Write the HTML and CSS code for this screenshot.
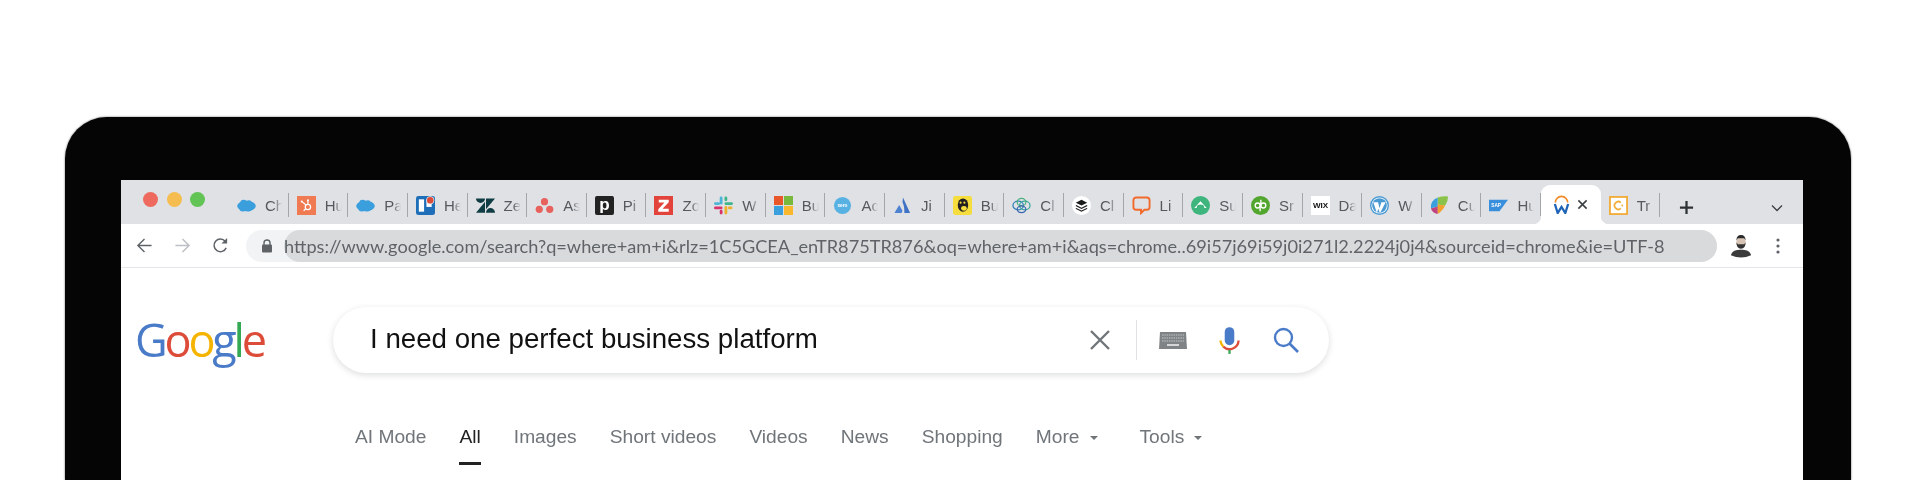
FILE: index.html
```html
<!DOCTYPE html>
<html lang="en">

<head>
    <meta charset="UTF-8">
    <meta name="viewport" content="width=device-width, initial-scale=1.0">
    <title>I need one perfect business platform</title>
    <link rel="stylesheet" href="styles.css">
</head>

<body>

    <div class="laptop">
        <div class="screen">

            <div class="tabstrip">
                <div class="lights">
                    <span class="light red"></span>
                    <span class="light yellow"></span>
                    <span class="light green"></span>
                </div>

                <div class="tab">
                    <svg viewBox="0 0 20 20"><g fill="#3a9fdc"><ellipse cx="10" cy="10.500" rx="9.800" ry="5.500"/><circle cx="7" cy="7.500" r="3.600"/><circle cx="12.500" cy="7.500" r="3"/><circle cx="6" cy="13" r="3.400"/><circle cx="12" cy="13" r="3.400"/></g></svg>
                    <span class="label">Ch</span>
                </div>
                <div class="tab">
                    <svg viewBox="0 0 20 20"><rect width="20" height="20" fill="#f07b52"/><g fill="none" stroke="#fff" stroke-width="1.300"><circle cx="11.500" cy="11.500" r="2.800"/><path d="M11.500 8.500V5M9.500 9.500L5.500 6.200M9.200 13.500L7 15.500"/></g><circle cx="11.500" cy="4.500" r="1.100" fill="#fff"/><circle cx="5" cy="5.800" r="1.100" fill="#fff"/></svg>
                    <span class="label">Hu</span>
                </div>
                <div class="tab">
                    <svg viewBox="0 0 20 20"><g fill="#3a9fdc"><ellipse cx="10" cy="10.500" rx="9.800" ry="5.500"/><circle cx="7" cy="7.500" r="3.600"/><circle cx="12.500" cy="7.500" r="3"/><circle cx="6" cy="13" r="3.400"/><circle cx="12" cy="13" r="3.400"/></g></svg>
                    <span class="label">Pa</span>
                </div>
                <div class="tab">
                    <svg viewBox="0 0 20 20"><rect width="20" height="20" rx="2.500" fill="#1f6fb8"/><rect x="3" y="3.500" width="5.500" height="13" fill="#fff"/><rect x="11" y="3.500" width="5.500" height="8" fill="#fff"/><circle cx="15" cy="4.500" r="4.200" fill="#dfe1e5"/><circle cx="15" cy="4.500" r="3.400" fill="#dd4b39"/></svg>
                    <span class="label">He</span>
                </div>
                <div class="tab">
                    <svg viewBox="0 0 20 20"><g fill="#103c43"><path d="M0 2.500H9.500A4.750 4.750 0 0 1 0 2.500Z"/><path d="M10.500 2.500H20L10.500 14Z"/><path d="M9.500 6V17.500H0Z"/><path d="M10.500 17.500A4.750 4.750 0 0 1 20 17.500Z"/></g></svg>
                    <span class="label">Ze</span>
                </div>
                <div class="tab">
                    <svg viewBox="0 0 20 20"><g fill="#e8615c"><circle cx="10" cy="6" r="3.800"/><circle cx="4.500" cy="14" r="3.800"/><circle cx="15.500" cy="14" r="3.800"/></g></svg>
                    <span class="label">As</span>
                </div>
                <div class="tab">
                    <svg viewBox="0 0 20 20"><rect width="20" height="20" rx="2" fill="#222"/><text x="10" y="15" class="favtext p">p</text></svg>
                    <span class="label">Pi</span>
                </div>
                <div class="tab">
                    <svg viewBox="0 0 20 20"><rect width="20" height="20" fill="#e2443b"/><path d="M5 4H15.500V6.500L9 13.500H15.500V16.500H4.500V14L11 6.800H5Z" fill="#fff"/></svg>
                    <span class="label">Zo</span>
                </div>
                <div class="tab">
                    <svg viewBox="0 0 20 20" fill="none" stroke-width="3" stroke-linecap="round"><path d="M7.500 2V7.500M1.500 8H5" stroke="#4db6d6"/><path d="M18.500 8H12.500M12.500 2V4" stroke="#3eb68a"/><path d="M12.500 12V18M18 12.500H16" stroke="#ecb22e"/><path d="M1.500 12.500H7.500M7.500 16V18" stroke="#d8336a"/></svg>
                    <span class="label">W</span>
                </div>
                <div class="tab">
                    <svg viewBox="0 0 20 20"><rect width="9.500" height="9.500" fill="#e8562a"/><rect x="10.500" width="9.500" height="9.500" fill="#78b83a"/><rect y="10.500" width="9.500" height="9.500" fill="#3a9fdc"/><rect x="10.500" y="10.500" width="9.500" height="9.500" fill="#f8b72c"/></svg>
                    <span class="label">Bu</span>
                </div>
                <div class="tab">
                    <svg viewBox="0 0 20 20"><circle cx="10" cy="10" r="9" fill="#57b2e3"/><text x="10" y="11.500" class="favtext tiny">xero</text></svg>
                    <span class="label">Ac</span>
                </div>
                <div class="tab">
                    <svg viewBox="0 0 20 20"><path d="M10.500 1.500L18 18H12Q12 10 10 6.500Z" fill="#3f72c4"/><path d="M6.500 9.500L10 15.500L9 18H1.500Z" fill="#4d82d2"/></svg>
                    <span class="label">Ji</span>
                </div>
                <div class="tab">
                    <svg viewBox="0 0 20 20"><rect width="20" height="20" rx="2.500" fill="#f5dd3d"/><ellipse cx="10.500" cy="9.500" rx="5.500" ry="7" fill="#231f20"/><ellipse cx="11.500" cy="13" rx="3" ry="2.600" fill="#f5dd3d"/><circle cx="8" cy="7" r="1.100" fill="#f5dd3d"/><circle cx="12" cy="7" r="1.100" fill="#f5dd3d"/></svg>
                    <span class="label">Bu</span>
                </div>
                <div class="tab">
                    <svg viewBox="0 0 20 20" fill="none" stroke-width="1.300"><ellipse cx="6.500" cy="10" rx="5.500" ry="4.500" stroke="#2e7fb8"/><ellipse cx="13.500" cy="10" rx="5.500" ry="4.500" stroke="#35a79c"/><ellipse cx="10" cy="6.500" rx="4.500" ry="4" stroke="#4caf7d"/><ellipse cx="10" cy="14" rx="4.500" ry="3.500" stroke="#3866b0"/></svg>
                    <span class="label">Cl</span>
                </div>
                <div class="tab">
                    <svg viewBox="0 0 20 20"><circle cx="10" cy="10" r="10" fill="#fff"/><path d="M10 4L16 7L10 10L4 7Z" fill="#1c1c1c"/><path d="M4.500 9.500L10 12.300L15.500 9.500L16.300 10.500L10 13.700L3.700 10.500Z" fill="#1c1c1c"/><path d="M4.500 12.500L10 15.300L15.500 12.500L16.300 13.500L10 16.700L3.700 13.500Z" fill="#1c1c1c"/></svg>
                    <span class="label">Cl</span>
                </div>
                <div class="tab">
                    <svg viewBox="0 0 20 20"><path d="M4.500 1.500H15.500A3 3 0 0 1 18.500 4.500V11.500A3 3 0 0 1 15.500 14.500H13L9.500 18V14.500H4.500A3 3 0 0 1 1.500 11.500V4.500A3 3 0 0 1 4.500 1.500Z" fill="none" stroke="#f26a2b" stroke-width="2"/></svg>
                    <span class="label">Li</span>
                </div>
                <div class="tab">
                    <svg viewBox="0 0 20 20"><circle cx="10" cy="10" r="10" fill="#3fb57e"/><path d="M3.500 12.500L10 5.500L16.500 12.500H14A4 3.500 0 0 0 6 12.500Z" fill="#fff"/></svg>
                    <span class="label">Su</span>
                </div>
                <div class="tab">
                    <svg viewBox="0 0 20 20"><circle cx="10" cy="10" r="10" fill="#53a62d"/><g fill="none" stroke="#fff" stroke-width="1.400"><circle cx="7" cy="10" r="2.600"/><circle cx="13" cy="10" r="2.600"/><path d="M9.600 10V16M10.400 10V4"/></g></svg>
                    <span class="label">Sr</span>
                </div>
                <div class="tab">
                    <svg viewBox="0 0 20 20"><rect width="20" height="20" fill="#fff"/><text x="10" y="13" class="favtext wix">WIX</text></svg>
                    <span class="label">Da</span>
                </div>
                <div class="tab">
                    <svg viewBox="0 0 20 20"><circle cx="10" cy="10" r="10" fill="#4a9ad4"/><circle cx="10" cy="10" r="8.500" fill="#fff"/><circle cx="10" cy="10" r="7.700" fill="#4a9ad4"/><path d="M3.500 6.500H8.500L10 13L12 6.500H16.500L11 17H10L8.800 13.500L7.500 17H7Z" fill="#fff"/></svg>
                    <span class="label">W</span>
                </div>
                <div class="tab">
                    <svg viewBox="0 0 20 20"><path d="M8 1.500Q14 0 19 0.500Q19 6 16 10L8 9Z" fill="#8bc34a"/><path d="M16 10Q13 16 8 19L7.500 9Z" fill="#f4a02c"/><path d="M8 19Q2 18 1 13L8 11Z" fill="#c0457f"/><path d="M1 13Q0 5 8 1.500L8 11Z" fill="#3a9fdc"/></svg>
                    <span class="label">Cu</span>
                </div>
                <div class="tab">
                    <svg viewBox="0 0 20 20"><path d="M0 4H20L11 16H0Z" fill="#3a8fdc"/><text x="7.500" y="12" class="favtext tiny">SAP</text></svg>
                    <span class="label">Hu</span>
                </div>
                <div class="tab active">
                    <svg viewBox="0 0 20 20"><path d="M3.500 8A6.500 6.500 0 0 1 16.500 8" fill="none" stroke="#f08a24" stroke-width="1.800"/><path d="M3 9.500L6 19L10 12.500L14 19L17 9.500" fill="none" stroke="#2064b8" stroke-width="2.400"/></svg>
                    <svg class="close" viewBox="0 0 12 12"><path d="M1.500 1.500L10.500 10.500M10.500 1.500L1.500 10.500" stroke="#3c4043" stroke-width="1.700"/></svg>
                </div>
                <div class="tab">
                    <svg viewBox="0 0 20 20"><rect x="1" y="1" width="18" height="18" fill="#fff" stroke="#f2ae3d" stroke-width="2"/><path d="M12.500 7A4 4 0 1 0 12.500 13" fill="none" stroke="#f2ae3d" stroke-width="1.800"/><circle cx="14" cy="10" r="1" fill="#f2ae3d"/></svg>
                    <span class="label">Tr</span>
                </div>

                <svg class="newtab" viewBox="0 0 16 16"><path d="M8 1V15M1 8H15" stroke="#2e3134" stroke-width="2.400"/></svg>
                <svg class="tablist" viewBox="0 0 12 8"><path d="M1 1.500L6 6.500L11 1.500" fill="none" stroke="#3c4043" stroke-width="1.300"/></svg>
            </div>

            <div class="toolbar">
                <svg class="navicon" viewBox="0 0 18 18"><path d="M16.500 9H2M9 2L2 9L9 16" fill="none" stroke="#5f6368" stroke-width="1.500"/></svg>
                <svg class="navicon" viewBox="0 0 18 18"><path d="M1.500 9H16M9 2L16 9L9 16" fill="none" stroke="#bcbfc3" stroke-width="1.500"/></svg>
                <svg class="navicon" viewBox="0 0 18 18"><path d="M15 11.500A6.700 6.700 0 1 1 14 4.500" fill="none" stroke="#5f6368" stroke-width="1.600"/><path d="M16 1V7H10Z" fill="#5f6368"/></svg>

                <div class="omnibox">
                    <svg class="lock" viewBox="0 0 12 14"><path d="M3 6V4A3 3 0 0 1 9 4V6" fill="none" stroke="#5f6368" stroke-width="1.400"/><rect x="1" y="5.500" width="10" height="8" rx="1" fill="#5f6368"/></svg>
                    <div class="url">https://www.google.com/search?q=where+am+i&amp;rlz=1C5GCEA_enTR875TR876&amp;oq=where+am+i&amp;aqs=chrome..69i57j69i59j0i271l2.2224j0j4&amp;sourceid=chrome&amp;ie=UTF-8</div>
                </div>

                <svg class="avatar" viewBox="0 0 24 26"><path d="M1 23C2 18 7 17 12 17S22 18 23 23Q12 28 1 23Z" fill="#3b3b3b"/><ellipse cx="12" cy="9" rx="5" ry="6.500" fill="#d8c4b4"/><path d="M7 9Q7 16 12 16T17 9L15.500 11H8.500Z" fill="#333"/><path d="M7 7Q7 1 12 1T17 7L15.500 4.500H8.500Z" fill="#2a2a2a"/></svg>
                <svg class="dots" viewBox="0 0 4 16"><circle cx="2" cy="2" r="1.600"/><circle cx="2" cy="8" r="1.600"/><circle cx="2" cy="14" r="1.600"/></svg>
            </div>

            <div class="search-row">
                <div class="logo"><span class="blue">G</span><span class="redtext">o</span><span class="yellowtext">o</span><span class="blue">g</span><span class="greentext">l</span><span class="redtext">e</span></div>
                <div class="searchbox">
                    <div class="query">I need one perfect business platform</div>
                    <svg class="clear" viewBox="0 0 20 20"><path d="M1 1L19 19M19 1L1 19" stroke="#70757a" stroke-width="2.400"/></svg>
                    <span class="divider"></span>
                    <svg class="keyboard" viewBox="0 0 28 17"><path d="M1 0H27L28 17H0Z" fill="#808386"/><path d="M3 3H25M3 6H25M3 9H25" stroke="#c4c6c8" stroke-width="1.200" stroke-dasharray="1.500 .8"/><rect x="8" y="12" width="12" height="2" fill="#d4d6d8"/></svg>
                    <svg class="mic" viewBox="0 0 22 30"><rect x="6" y="1" width="10" height="19" rx="5" fill="#4a7bc8"/><path d="M1.500 15A9.500 9.500 0 0 0 4.500 21.500" fill="none" stroke="#f4b400" stroke-width="2.400"/><path d="M4.500 21.500A9.500 9.500 0 0 0 20.500 15" fill="none" stroke="#dd4b39" stroke-width="2.400"/><rect x="9.800" y="25" width="2.400" height="4" fill="#34a853"/></svg>
                    <svg class="magnifier" viewBox="0 0 26 26"><circle cx="10.500" cy="10.500" r="8.500" fill="none" stroke="#4a7bc8" stroke-width="2.400"/><path d="M16.500 16.500L25 25" stroke="#4a7bc8" stroke-width="2.600"/></svg>
                </div>
            </div>

            <div class="nav">
                <a class="navitem">AI Mode</a>
                <a class="navitem current">All</a>
                <a class="navitem">Images</a>
                <a class="navitem">Short videos</a>
                <a class="navitem">Videos</a>
                <a class="navitem">News</a>
                <a class="navitem">Shopping</a>
                <a class="navitem">More<span class="caret"></span></a>
                <a class="navitem tools">Tools<span class="caret"></span></a>
            </div>

        </div>
    </div>

</body>

</html>
```

FILE: styles.css
```css
html,
body {
    margin: 0;
    padding: 0;
    height: 480px;
    overflow: hidden;
    background-color: #fff;
    font-family: "Liberation Sans", Arial, sans-serif;
}

/* black bezel round the screen, a bit soft like the photo */
.laptop {
    height: 300px;
    margin: 117px 69px 0 65px;
    padding: 63px 48px 0 56px;
    background-color: #050505;
    border-radius: 42px 42px 0 0;
    box-shadow: 0 0 2px #555;
    filter: blur(0.4px);
}

.screen {
    height: 300px;
    background-color: #fff;
    overflow: hidden;
}

/* tab strip */
.tabstrip {
    display: flex;
    align-items: flex-end;
    height: 44px;
    background-color: #dfe1e5;
}

.lights {
    display: flex;
    align-self: flex-start;
    gap: 8.500px;
    width: 108px;
    padding: 12px 0 0 22px;
    box-sizing: border-box;
}

.light {
    width: 15px;
    height: 15px;
    border-radius: 50%;
}

.red { background-color: #ee6a5f; }
.yellow { background-color: #f5bd4f; }
.green { background-color: #61c454; }

.tab {
    position: relative;
    display: flex;
    align-items: center;
    flex: 0 0 59.650px;
    box-sizing: border-box;
    height: 24px;
    margin-bottom: 7px;
    padding-left: 8px;
    border-right: 1.500px solid #a4a7aa;
    color: #55585c;
    font-size: 15px;
}

.tab svg {
    flex: 0 0 19px;
    width: 19px;
    height: 19px;
}

.label {
    width: 20px;
    margin-left: 9px;
    white-space: nowrap;
    -webkit-mask-image: linear-gradient(to right, #000 45%, transparent 85%);
    mask-image: linear-gradient(to right, #000 45%, transparent 85%);
}

.tab.active {
    height: 39px;
    margin-bottom: 0;
    padding-left: 11px;
    background-color: #fff;
    border-right: 0;
    border-radius: 9px 9px 0 0;
}

/* the little flares where the active tab meets the toolbar */
.tab.active::before,
.tab.active::after {
    content: "";
    position: absolute;
    bottom: 0;
    width: 8px;
    height: 8px;
}

.tab.active::before {
    left: -8px;
    background: radial-gradient(circle at 0 0, #dfe1e5 8px, #fff 8.500px);
}

.tab.active::after {
    right: -8px;
    background: radial-gradient(circle at 100% 0, #dfe1e5 8px, #fff 8.500px);
}

.tab svg.close {
    flex: 0 0 11px;
    width: 11px;
    height: 11px;
    margin-left: 6px;
}

.favtext {
    fill: #fff;
    text-anchor: middle;
    font-family: "Liberation Sans", Arial, sans-serif;
    font-weight: bold;
}

.favtext.p { font-size: 18px; }
.favtext.tiny { font-size: 5px; }
.favtext.wix { font-size: 8.500px; fill: #111; }

.newtab {
    width: 15px;
    height: 15px;
    margin: 0 0 9px 19px;
}

.tablist {
    width: 12px;
    height: 8px;
    margin: 0 0 12px 77px;
}

/* address bar */
.toolbar {
    display: flex;
    align-items: center;
    height: 43px;
    padding-left: 15px;
    border-bottom: 1px solid #e4e6e9;
}

.navicon {
    width: 17px;
    height: 17px;
    margin-right: 21px;
}

.omnibox {
    display: flex;
    align-items: center;
    height: 32px;
    width: 1471px;
    margin-left: -4px;
    padding-left: 15px;
    box-sizing: border-box;
    background-color: #f1f3f4;
    border-radius: 16px;
}

.lock {
    width: 12px;
    height: 14px;
    margin-right: 11px;
}

.url {
    flex: 1;
    height: 32px;
    line-height: 32px;
    background-color: #d9dadc;
    border-radius: 16px;
    color: #5f6368;
    font-family: Lato, sans-serif;
    font-size: 18.180px;
    white-space: nowrap;
}

.avatar {
    width: 22px;
    height: 24px;
    margin-left: 13px;
}

.dots {
    width: 4px;
    height: 16px;
    margin-left: 24px;
    fill: #5f6368;
}

/* search row */
.search-row {
    display: flex;
    margin-top: 39px;
    align-items: center;
}

.logo {
    flex: 0 0 212px;
    box-sizing: border-box;
    padding-left: 14px;
    font-family: "Open Sans", sans-serif;
    font-weight: 500;
    font-size: 45px;
    line-height: 66px;
    letter-spacing: -3.200px;
}

.blue { color: #4a7bc8; }
.redtext { color: #dd4b39; }
.yellowtext { color: #f4b400; }
.greentext { color: #34a853; }

.searchbox {
    display: flex;
    align-items: center;
    width: 996px;
    height: 66px;
    box-sizing: border-box;
    padding-left: 37px;
    background-color: #fff;
    border-radius: 33px;
    box-shadow: 0 2px 6px rgba(60, 64, 67, 0.18);
}

.query {
    flex: 1;
    margin-top: -2px;
    font-size: 27.700px;
    color: #111;
}

.clear {
    width: 20px;
    height: 20px;
    margin-right: 26px;
}

.divider {
    width: 1px;
    height: 40px;
    background-color: #dfe1e5;
}

.keyboard {
    width: 28px;
    height: 17px;
    margin-left: 22px;
}

.mic {
    width: 21px;
    height: 29px;
    margin-left: 32px;
}

.magnifier {
    width: 26px;
    height: 26px;
    margin: 0 30px 0 33px;
}

/* search tabs */
.nav {
    display: flex;
    gap: 33px;
    margin: 53px 0 0 234px;
}

.navitem {
    position: relative;
    color: #70757a;
    font-size: 19.200px;
    line-height: 22px;
    white-space: nowrap;
}

.navitem.current {
    color: #222;
}

.navitem.current::after {
    content: "";
    position: absolute;
    left: 0;
    right: 0;
    top: 36px;
    height: 2.500px;
    background-color: #222;
}

.navitem.tools {
    margin-left: 9px;
}

.caret {
    display: inline-block;
    margin-left: 10px;
    vertical-align: middle;
    border-top: 4px solid #70757a;
    border-left: 4px solid transparent;
    border-right: 4px solid transparent;
}
```
